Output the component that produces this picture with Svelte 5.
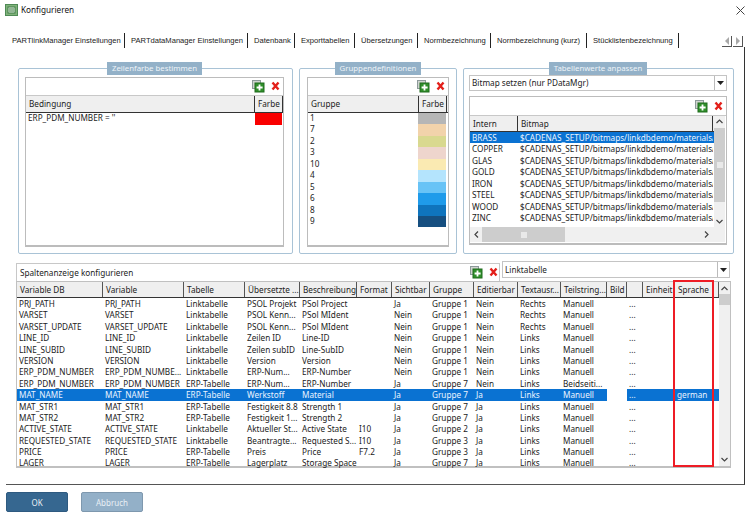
<script>
  const tabs = [
    ['PARTlinkManager Einstellungen', 113], ['PARTdataManager Einstellungen', 123], ['Datenbank', 47], ['Exporttabellen', 60],
    ['Übersetzungen', 63], ['Normbezeichnung', 73], ['Normbezeichnung (kurz)', 96], ['Stücklistenbezeichnung', 92]
  ];
  const swatches = ['#b6b6b6', '#f2d3ab', '#d9d990', '#eed5cd', '#faeab2', '#b4e4fd', '#68c3f6', '#1f9bea', '#0f74bd', '#164f80'];
  const groups = ['1', '7', '2', '3', '10', '4', '5', '6', '8', '9'];
  const mats = ['BRASS', 'COPPER', 'GLAS', 'GOLD', 'IRON', 'STEEL', 'WOOD', 'ZINC'];
  const head = ['Variable DB', 'Variable', 'Tabelle', 'Übersetzte ...', 'Beschreibung', 'Format', 'Sichtbar', 'Gruppe', 'Editierbar', 'Textausr...', 'Teilstring...', 'Bild', '', 'Einheit', 'Sprache'];
  const rows = [
    ['PRJ_PATH', 'PRJ_PATH', 'Linktabelle', 'PSOL Projekt', 'PSol Project', '', 'Ja', 'Gruppe 1', 'Nein', 'Rechts', 'Manuell'],
    ['VARSET', 'VARSET', 'Linktabelle', 'PSOL Kenn...', 'PSol MIdent', '', 'Nein', 'Gruppe 1', 'Nein', 'Rechts', 'Manuell'],
    ['VARSET_UPDATE', 'VARSET_UPDATE', 'Linktabelle', 'PSOL Kenn...', 'PSol MIdent', '', 'Nein', 'Gruppe 1', 'Nein', 'Rechts', 'Manuell'],
    ['LINE_ID', 'LINE_ID', 'Linktabelle', 'Zeilen ID', 'Line-ID', '', 'Nein', 'Gruppe 1', 'Nein', 'Links', 'Manuell'],
    ['LINE_SUBID', 'LINE_SUBID', 'Linktabelle', 'Zeilen subID', 'Line-SubID', '', 'Nein', 'Gruppe 1', 'Nein', 'Links', 'Manuell'],
    ['VERSION', 'VERSION', 'Linktabelle', 'Version', 'Version', '', 'Nein', 'Gruppe 1', 'Nein', 'Links', 'Manuell'],
    ['ERP_PDM_NUMBER', 'ERP_PDM_NUMBE...', 'Linktabelle', 'ERP-Num...', 'ERP-Number', '', 'Nein', 'Gruppe 1', 'Nein', 'Links', 'Manuell'],
    ['ERP_PDM_NUMBER', 'ERP_PDM_NUMBER', 'ERP-Tabelle', 'ERP-Num...', 'ERP-Number', '', 'Ja', 'Gruppe 7', 'Nein', 'Links', 'Beidseiti...'],
    ['MAT_NAME', 'MAT_NAME', 'ERP-Tabelle', 'Werkstoff', 'Material', '', 'Ja', 'Gruppe 7', 'Ja', 'Links', 'Manuell'],
    ['MAT_STR1', 'MAT_STR1', 'ERP-Tabelle', 'Festigkeit 8.8', 'Strength 1', '', 'Ja', 'Gruppe 7', 'Ja', 'Links', 'Manuell'],
    ['MAT_STR2', 'MAT_STR2', 'ERP-Tabelle', 'Festigkeit 1...', 'Strength 2', '', 'Ja', 'Gruppe 7', 'Ja', 'Links', 'Manuell'],
    ['ACTIVE_STATE', 'ACTIVE_STATE', 'Linktabelle', 'Aktueller St...', 'Active State', 'I10', 'Ja', 'Gruppe 2', 'Ja', 'Links', 'Manuell'],
    ['REQUESTED_STATE', 'REQUESTED_STATE', 'Linktabelle', 'Beantragte...', 'Requested S...', 'I10', 'Ja', 'Gruppe 3', 'Ja', 'Links', 'Manuell'],
    ['PRICE', 'PRICE', 'ERP-Tabelle', 'Preis', 'Price', 'F7.2', 'Ja', 'Gruppe 3', 'Ja', 'Links', 'Manuell'],
    ['LAGER', 'LAGER', 'ERP-Tabelle', 'Lagerplatz', 'Storage Space', '', 'Ja', 'Gruppe 7', 'Ja', 'Links', 'Manuell']
  ];
</script>

{#snippet tools()}
  <svg class="tool" width="29" height="13" viewBox="0 0 29 13">
    <rect x="0.5" y="0.5" width="8" height="8" fill="#d0d4d0" stroke="#8d9a9a" />
    <rect x="3" y="3" width="9" height="9" fill="#2f8f2a" stroke="#1f6b1c" />
    <path d="M7.5 4.6v6M4.6 7.5h6" stroke="#fff" stroke-width="1.8" />
    <path d="M20.5 2.5l6 7M26.5 2.5l-6 7" stroke="#e3201b" stroke-width="2.4" />
  </svg>
{/snippet}

<div class="win">
  <header class="title">
    <svg width="13" height="12" viewBox="0 0 13 12">
      <rect x="0.5" y="0.5" width="12" height="11" fill="#7fb27a" stroke="#4f8a55" />
      <rect x="3" y="3" width="7" height="6" fill="#e8f2e6" stroke="#3f7a45" />
      <path d="M4 5h5M4 7h5" stroke="#3f7a45" />
    </svg>
    <span>Konfigurieren</span>
    <svg class="close" width="9" height="9" viewBox="0 0 9 9"><path d="M.5.5l8 8M8.500.5l-8 8" stroke="#444" fill="none" /></svg>
  </header>

  <nav class="tabs">
    {#each tabs as [t, w]}
      <div class="tab" style="width:{w}px">{t}</div>
    {/each}
    <div class="arrows">
      <span class="arrow"><svg width="6" height="8" viewBox="0 0 6 8"><path d="M5 0v8L1 4z" fill="#a8a8a8" /></svg></span>
      <span class="arrow"><svg width="6" height="8" viewBox="0 0 6 8"><path d="M1 0v8l4-4z" fill="#a8a8a8" /></svg></span>
    </div>
  </nav>

  <main class="frame">
    <section class="panels">
      <fieldset class="panel p1">
        <legend>Zeilenfarbe bestimmen</legend>
        <div class="box">
          <div class="toolbar">{@render tools()}</div>
          <div class="hd two1"><span>Bedingung</span><span>Farbe</span></div>
          <div class="cond"><span>ERP_PDM_NUMBER = ''</span><i class="red"></i></div>
        </div>
      </fieldset>

      <fieldset class="panel p2">
        <legend>Gruppendefinitionen</legend>
        <div class="box">
          <div class="toolbar">{@render tools()}</div>
          <div class="hd two2"><span>Gruppe</span><span>Farbe</span></div>
          <div class="glist">
            {#each groups as g, i}
              <div class="grow"><span>{g}</span><i style="background:{swatches[i]}"></i></div>
            {/each}
          </div>
        </div>
      </fieldset>

      <fieldset class="panel p3">
        <legend>Tabellenwerte anpassen</legend>
        <div class="combo c3"><span>Bitmap setzen (nur PDataMgr)</span><b><svg width="7" height="4" viewBox="0 0 7 4"><path d="M0 0h7L3.500 4z" fill="#222" /></svg></b></div>
        <div class="box b3">
          <div class="toolbar t3">{@render tools()}</div>
          <div class="mgrid">
            <div class="mmain">
              <div class="hd h3 two3"><span>Intern</span><span>Bitmap</span></div>
              {#each mats as m, i}
                <div class="mrow" class:sel={i === 0}><span>{m}</span><span>$CADENAS_SETUP/bitmaps/linkdbdemo/materials/</span></div>
              {/each}
            </div>
            <div class="vbar">
              <svg width="7" height="5" viewBox="0 0 7 5"><path d="M.5 4l3-3 3 3" stroke="#444" fill="none" stroke-width="1.200" /></svg>
              <div class="vthumb"><i></i></div>
              <svg width="7" height="5" viewBox="0 0 7 5"><path d="M.5 1l3 3 3-3" stroke="#444" fill="none" stroke-width="1.200" /></svg>
            </div>
            <div class="hbar">
              <svg width="5" height="7" viewBox="0 0 5 7"><path d="M4 .5l-3 3 3 3" stroke="#444" fill="none" stroke-width="1.200" /></svg>
              <div class="hthumb"><i></i></div>
              <svg class="hnext" width="5" height="7" viewBox="0 0 5 7"><path d="M1 .5l3 3-3 3" stroke="#444" fill="none" stroke-width="1.200" /></svg>
            </div>
          </div>
        </div>
      </fieldset>
    </section>

    <section class="lower">
      <div class="ltop">
        <div class="lbar"><span>Spaltenanzeige konfigurieren</span>{@render tools()}</div>
        <div class="combo c4"><span>Linktabelle</span><b><svg width="7" height="4" viewBox="0 0 7 4"><path d="M0 0h7L3.500 4z" fill="#222" /></svg></b></div>
      </div>
      <div class="table">
        <div class="tmain">
          <div class="thead cols">
            {#each head as h}<span>{h}</span>{/each}
          </div>
          {#each rows as r, ri}
            <div class="trow cols" class:sel={ri === 8}>
              {#each r as c}<span>{c}</span>{/each}
              <span class="gap"></span>
              <span class="dots">...</span>
              <span></span>
              <span>{ri === 8 ? 'german' : ''}</span>
            </div>
          {/each}
          <div class="redbox"></div>
        </div>
        <div class="tbar">
          <svg width="7" height="5" viewBox="0 0 7 5"><path d="M.5 4l3-3 3 3" stroke="#444" fill="none" stroke-width="1.200" /></svg>
          <div class="tthumb"></div>
          <svg width="7" height="5" viewBox="0 0 7 5"><path d="M.5 1l3 3 3-3" stroke="#444" fill="none" stroke-width="1.200" /></svg>
        </div>
      </div>
    </section>
  </main>

  <footer class="foot">
    <button class="ok">OK</button>
    <button class="cancel">Abbruch</button>
  </footer>
</div>

<style>
  :global(body) { margin: 0; background: #fff; }
  .win { width: 750px; height: 518px; overflow: hidden; background: #fff; color: #222; font: 8.2px/11.45px "Noto Sans", sans-serif; display: flex; flex-direction: column; }
  .title { height: 20px; display: flex; align-items: center; gap: 3px; padding-left: 5px; color: #111; }
  .close { margin-left: auto; margin-right: 5px; }
  .tabs { height: 27px; padding: 13px 0 0 12px; box-sizing: border-box; display: flex; font: 7.6px/15px "Liberation Sans", sans-serif; }
  .tab { height: 15px; box-sizing: border-box; border-right: 1px solid #222; white-space: nowrap; }
  .tab + .tab { padding-left: 6px; }
  .arrows { margin-left: auto; margin-top: 3px; margin-right: 7px; display: flex; gap: 1px; }
  .arrow { width: 10px; height: 11px; display: flex; align-items: center; justify-content: center; border-right: 1px solid #555; border-bottom: 1px solid #555; box-sizing: border-box; }

  .frame { margin-left: 6px; width: 739px; height: 438px; box-sizing: border-box; border-right: 1px solid #333; border-bottom: 1px solid #555; padding: 15px 0 0 10px; }
  .panels { height: 193px; display: flex; padding-left: 2px; align-items: flex-start; }
  .panel { margin: 0; box-sizing: border-box; height: 192px; border: 1px solid #a9c3d6; border-radius: 2px; padding: 2px 7px 0; min-width: 0; }
  .p1 { width: 275px; margin-right: 6px; padding-left: 6px; padding-right: 8px; }
  .p2 { width: 158px; margin-right: 6px; }
  .p3 { width: 271px; padding: 0 6px 0 5px; }
  legend { background: #93b1c8; color: #eef4f8; font-size: 7.8px; line-height: 13px; padding: 0 5px; margin: 0 auto; white-space: nowrap; }
  .box { height: 170px; box-sizing: border-box; border: 1px solid #bcbcbc; border-bottom-width: 2px; background: #fff; }
  .toolbar { height: 17px; display: flex; justify-content: flex-end; align-items: center; padding-right: 2px; border-bottom: 1px solid #c8c8c8; }
  .hd { height: 16px; background: #efefef; border-bottom: 1px solid #333; display: grid; line-height: 15px; }
  .h3 { height: 15px; }
  .hd span { padding-left: 3px; border-right: 1px solid #333; overflow: hidden; white-space: nowrap; }
  .two1 { grid-template-columns: 229px 28px; }
  .two2 { grid-template-columns: 111px 28px; }
  .two3 { grid-template-columns: 48px 195px; }
  .cond { display: flex; justify-content: space-between; padding-left: 2px; height: 12px; width: 256px; box-sizing: border-box; line-height: 10px; }
  .red { width: 27px; height: 12px; background: #f90000; }
  .glist { padding-left: 2px; width: 138px; box-sizing: border-box; }
  .grow { display: flex; justify-content: space-between; height: 11.450px; line-height: 9.500px; }
  .grow i { width: 28px; }

  .combo { display: flex; justify-content: space-between; align-items: center; box-sizing: border-box; border: 1px solid #c4c4c4; background: #fff; padding-left: 2px; }
  .combo b { width: 11px; height: 100%; border-left: 1px solid #bbb; display: flex; align-items: center; justify-content: center; }
  .c3 { height: 16px; margin-top: 0; }
  .b3 { height: 149px; margin-top: 5px; }
  .t3 { height: 18px; }
  .mgrid { display: grid; grid-template-columns: 244px 11px; grid-template-rows: 111px 15px; }
  .mrow { display: grid; grid-template-columns: 48px 195px; height: 11.450px; white-space: nowrap; overflow: hidden; padding-left: 0; }
  .mrow span { padding-left: 2px; overflow: hidden; }
  .sel { background: #0a72d2; color: #eaf4ff; }
  .vbar { grid-row: 1; grid-column: 2; background: #f0f0f0; display: flex; flex-direction: column; align-items: center; padding: 3px 0; box-sizing: border-box; justify-content: space-between; }
  .vthumb { width: 100%; height: 74px; margin-top: 4px; margin-bottom: auto; background: #cdcdcd; display: flex; align-items: center; justify-content: center; }
  .vthumb i { width: 6px; height: 6px; background: #e9e9e9; }
  .hbar { grid-row: 2; grid-column: 1 / 3; background: #f0f0f0; display: flex; align-items: center; padding: 0 4px; }
  .hthumb { width: 83px; height: 100%; margin-left: 3px; background: #cdcdcd; display: flex; align-items: center; justify-content: center; }
  .hthumb i { width: 6px; height: 6px; background: #e9e9e9; }
  .hnext { margin-left: auto; margin-right: 12px; }

  .lower { margin-top: 6px; }
  .ltop { display: flex; gap: 2px; align-items: flex-start; }
  .lbar { width: 484px; height: 18px; margin-top: 2px; box-sizing: border-box; border: 1px solid #c8c8c8; border-bottom: 0; padding: 0 0 0 3px; display: flex; align-items: center; justify-content: space-between; }
  .c4 { width: 228px; height: 17px; }
  .table { width: 715px; height: 187px; box-sizing: border-box; border: 1px solid #c0c0c0; border-bottom-width: 2px; display: flex; }
  .tmain { width: 702px; position: relative; }
  .cols { display: grid; grid-template-columns: 86px 81px 61px 55px 57px 35px 38px 44px 44px 43px 46px 20px 16px 32px 44px; white-space: nowrap; }
  .thead { height: 15px; background: #efefef; border-bottom: 1px solid #333; line-height: 15px; }
  .thead span { padding-left: 3px; border-right: 1px solid #555; overflow: hidden; }
  .trow { height: 11.400px; }
  .trow span { padding-left: 2px; overflow: hidden; }
  .trow.sel { background: linear-gradient(to right, #0a72d2 0 590px, #fff 590px 610px, #0a72d2 610px); }
  .dots { padding-left: 4px; }
  .redbox { position: absolute; left: 656px; top: -2px; width: 41px; height: 187px; box-sizing: border-box; border: 2px solid #ee1c25; pointer-events: none; }
  .tbar { flex: 1; background: #f0f0f0; display: flex; flex-direction: column; align-items: center; justify-content: space-between; padding: 4px 0; box-sizing: border-box; position: relative; }
  .tthumb { width: 100%; height: 11px; background: #cdcdcd; margin-bottom: auto; margin-top: 3px; }

  .foot { display: flex; gap: 13px; padding: 7px 0 0 6px; }
  button { width: 62px; height: 20px; border: 1px solid #7e98ae; border-radius: 2px; font: 8px "Noto Sans", sans-serif; color: #e8eff5; padding: 0; }
  .ok { background: #366790; border-color: #2e5a80; }
  .cancel { background: #93b0c8; }
</style>
